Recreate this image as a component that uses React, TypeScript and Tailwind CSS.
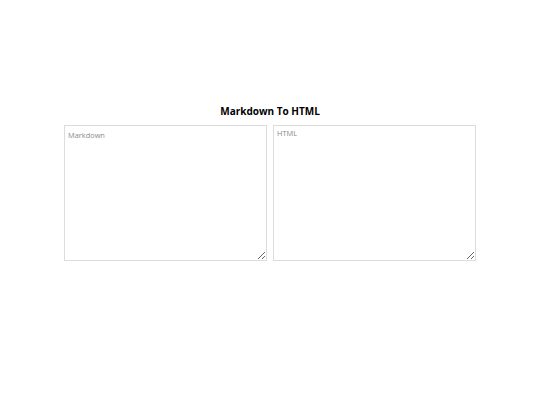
import React, { useState } from 'react';

export default function App() {
    const [markdown, setMarkdown] = useState('');

    return (
        <div className="w-[540px] h-[405px] bg-white pt-[104px]" style={{ fontFamily: '"Open Sans", "Noto Sans", sans-serif' }}>
            <h1 className="text-center text-[10px] leading-[15px] font-bold text-black mb-[6px]">Markdown To HTML</h1>
            <div className="flex gap-[6px] px-[64px]">
                <textarea
                    className="w-[203px] h-[136px] border border-[#dcdcdc] px-[3px] py-[3px] text-[7.4px] leading-[12px] text-[#333] placeholder-[#8a8a8a] outline-none resize"
                    placeholder="Markdown"
                    value={markdown}
                    onChange={(e) => setMarkdown(e.target.value)}
                />
                <textarea
                    readOnly
                    className="w-[203px] h-[136px] border border-[#dcdcdc] px-[3px] py-[2px] text-[7.4px] leading-[11px] text-[#333] placeholder-[#8a8a8a] outline-none resize"
                    placeholder="HTML"
                    value={markdown}
                />
            </div>
        </div>
    );
}
